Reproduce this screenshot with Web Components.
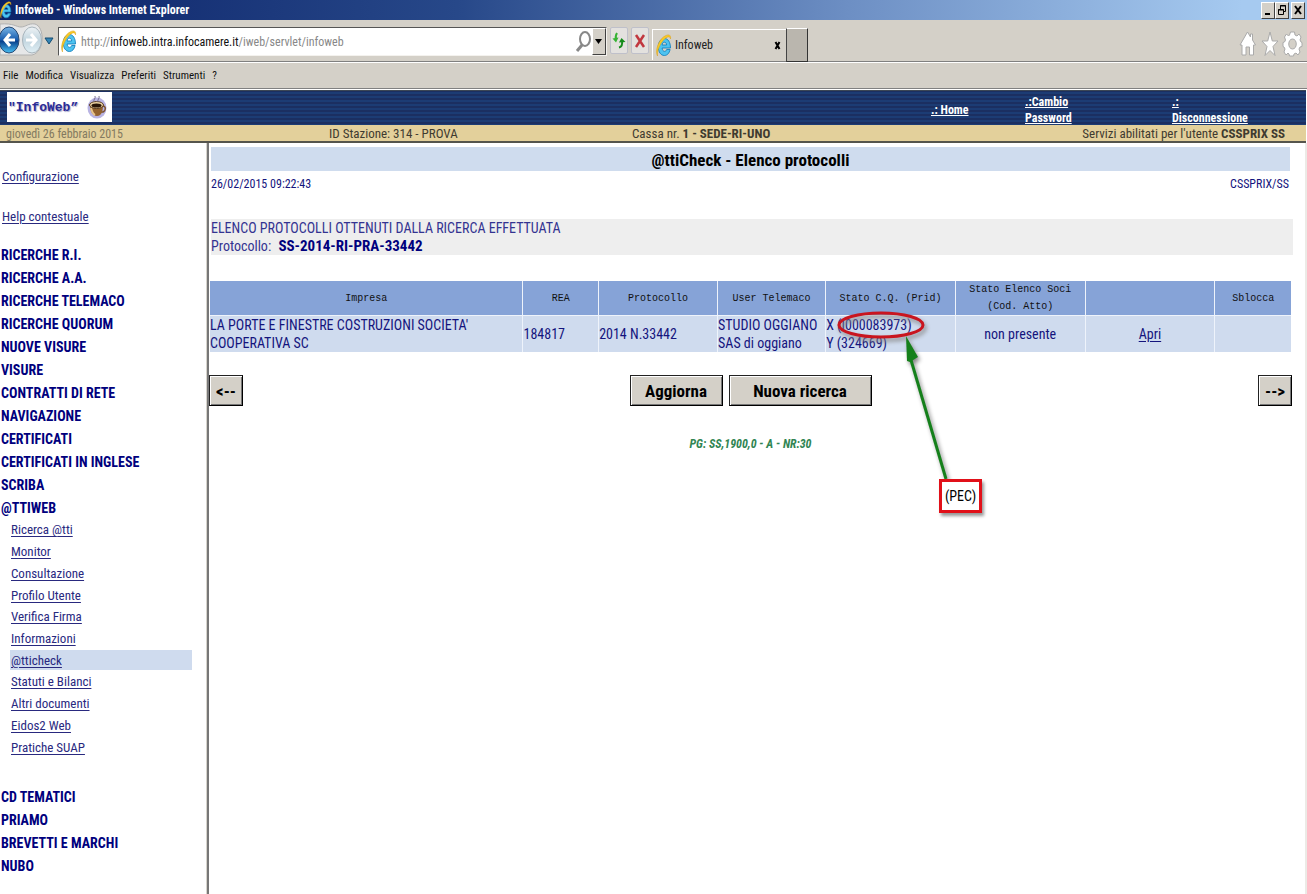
<!DOCTYPE html>
<html lang="it">
<head>
<meta charset="utf-8">
<title>Infoweb</title>
<style>
html,body{margin:0;min-height:100%;background:#fff;overflow-x:hidden}
body{--ui:"Roboto Condensed",Roboto,sans-serif;font-family:var(--ui);font-size:12px;color:#14147d}
</style>
</head>
<body>
<infoweb-app></infoweb-app>
<script>
function define(name, markup) {
  const t = document.createElement('template');
  t.innerHTML = markup;
  customElements.define(name, class extends HTMLElement {
    constructor() {
      super();
      this.attachShadow({ mode: 'open' }).append(t.content.cloneNode(true));
    }
  });
}

define('ie-logo', `
<style>:host{display:block}svg{display:block;width:100%;height:100%}</style>
<svg viewBox="1 0 21 23" preserveAspectRatio="none" aria-hidden="true">
  <path d="M19.500 15.500c-1 3.500-3.500 6-7.500 6-4.800 0-8-3.700-8-8.500S7.200 4.500 12 4.500s8 3.700 8 9.500H9c.3 2 1.500 3.400 3.300 3.400 1.300 0 2.200-.7 2.700-1.900zM9 11h6c-.2-1.800-1.300-2.800-3-2.800S9.300 9.200 9 11z" fill="#4dc3f0" stroke="#1280bd" stroke-width="1"/>
  <path d="M3 22C-1 17 5 4 14 1.500c4-1.400 7-.5 6 3.500-.3-3-4-2.500-7-.5C7 8.500 2 17 3 22z" fill="#f7c928" stroke="#d89a10" stroke-width=".5"/>
</svg>`);

define('ie-titlebar', `
<style>
:host{display:flex;align-items:center;height:20px;background:linear-gradient(90deg,#0c2369 0,#274889 35%,#6d8fc4 65%,#a6caf0 95%);color:#fff;font-weight:bold}
ie-logo{width:12px;height:18px;margin-right:3px;flex:none}
span{flex:1;line-height:20px}
.c{display:flex;padding-right:2px}
button{width:14px;height:17px;padding:0;border:1px solid;border-color:#fff #404040 #404040 #fff;background:#d4d0c8;display:block}
button:last-child{margin-left:2px}
svg{display:block;width:12px;height:14px}
</style>
<ie-logo></ie-logo><span>Infoweb - Windows Internet Explorer</span>
<div class="c">
<button aria-label="Riduci"><svg viewBox="0 0 12 14"><path d="M3 11h5" stroke="#000" stroke-width="2"/></svg></button>
<button aria-label="Ripristina"><svg viewBox="0 0 12 14"><path d="M4.500 6V2.500h5v6H8M4 3h6M2.500 6.500h5v5h-5zM2 7h6" fill="none" stroke="#000"/></svg></button>
<button aria-label="Chiudi"><svg viewBox="0 0 12 14"><path d="M3 3l6 8M9 3l-6 8" stroke="#000" stroke-width="2"/></svg></button>
</div>`);

define('ie-tab', `
<style>
:host{display:flex;align-items:center;width:134px;height:31px;border-left:1px solid #fff;border-top:1px solid #fff;box-sizing:border-box;color:#222}
ie-logo{width:16px;height:23px;margin:0 3px 0 3px}
span{flex:1}
button{border:0;background:none;padding:0;width:8px;height:12px;margin-right:4px}
svg{display:block}
</style>
<ie-logo></ie-logo><span><slot></slot></span>
<button aria-label="Chiudi scheda"><svg width="8" height="12" viewBox="0 0 8 12"><path d="M1.500 3l4 7M5.500 3l-4 7" stroke="#000" stroke-width="2"/></svg></button>`);

define('ie-toolbar', `
<style>
:host{display:flex;align-items:flex-start;height:41px;background:#d4d0c8;border-bottom:1px solid #808080;box-shadow:0 1px #fff}
.nav{flex:none;width:58px;height:41px}
.addr{display:flex;align-items:center;flex:0 1 549px;height:29px;box-sizing:border-box;margin-top:7px;background:#fff;border:1px solid;border-color:#555 #f4f2ee #f4f2ee #555}
.addr ie-logo{flex:none;width:16px;height:23px;margin:0 4px 0 2px}
.u{flex:1;position:relative;display:flex;color:#888;white-space:pre}
.u b{font-weight:normal;color:#111}
.u input{position:absolute;inset:0;border:0;padding:0;width:100%;background:transparent;font:inherit}
button{padding:0;box-sizing:border-box;background:none;border:0}
svg{display:block}
.dd{width:14px;height:27px;background:#d4d0c8;border:1px solid;border-color:#fff #404040 #404040 #fff}
.sq{width:18px;height:27px;margin:7px 0 0 3px;background:#e3e1de;border:1px solid #bfc0ca;border-radius:2px}
ie-tab{margin:9px 0 0 3px}
.new{width:22px;height:34px;margin:8px 0 0;background:#bab6ae;border:1px solid;border-color:#fff #333 #333 #444}
.sp{flex:1}
</style>
<svg class="nav" viewBox="0 0 58 41" role="img" aria-label="Indietro e avanti">
  <defs><linearGradient id="a" x2="0" y2="1"><stop stop-color="#78b5e6"/><stop offset=".48" stop-color="#1a5eaf"/><stop offset=".55" stop-color="#08408c"/><stop offset="1" stop-color="#4ac2f5"/></linearGradient>
  <linearGradient id="b" x2="0" y2="1"><stop stop-color="#eef3f6"/><stop offset=".5" stop-color="#c2d5df"/><stop offset="1" stop-color="#e0eff5"/></linearGradient></defs>
  <path d="M0 4C14 3 16 7 21 7s7-4 14-3c10 3 10 28-3 31H0z" fill="#e6e7e8" stroke="#b0b0b0"/>
  <ellipse cx="9" cy="20" rx="10" ry="13" fill="url(#a)" stroke="#294b75" stroke-width="1"/>
  <ellipse cx="32" cy="20" rx="9.500" ry="13" fill="url(#b)" stroke="#a7b4bc" stroke-width="1"/>
  <path d="M15 20H5M10 14l-5 6 5 6" fill="none" stroke="#fff" stroke-width="3"/>
  <path d="M26 20h10M31 14l5 6-5 6" fill="none" stroke="#fff" stroke-width="3"/>
  <path d="M45 18h8l-4 6z" fill="#3485b5" stroke="#164d73"/>
</svg>
<div class="addr"><ie-logo></ie-logo><div class="u">http://<b>infoweb.intra.infocamere.it</b>/iweb/servlet/infoweb<input aria-label="Indirizzo"></div>
<svg width="18" height="27" viewBox="0 0 18 27"><ellipse cx="11" cy="11" rx="5" ry="7" fill="none" stroke="#888" stroke-width="2"/><path d="M8 17l-5 6" stroke="#888" stroke-width="3"/></svg>
<button class="dd" aria-label="Cronologia"><svg width="12" height="25"><path d="M2 10h7l-3.500 5z" fill="#000"/></svg></button></div>
<button class="sq" aria-label="Aggiorna pagina"><svg width="16" height="25" viewBox="0 0 16 25"><path d="M6 5q-2 3-1 7" fill="none" stroke="#35b335" stroke-width="2"/><path d="M1.500 10.500l3.500 4 2.500-5z" fill="#35b335"/><path d="M8 19.500q4-1 3-7" fill="none" stroke="#158c1b" stroke-width="2"/><path d="M8 14.500l2.500-4.500 4 4z" fill="#158c1b"/></svg></button>
<button class="sq" aria-label="Interrompi"><svg width="16" height="25" viewBox="0 0 16 25"><path d="M4 7l8 12M12 7L4 19" stroke="#c1373f" stroke-width="2.500"/></svg></button>
<ie-tab>Infoweb</ie-tab>
<button class="new" aria-label="Nuova scheda"></button>
<div class="sp"></div>
<svg width="68" height="41" viewBox="0 0 68 41" fill="#fff" stroke="#aaa" stroke-width="1">
 <path d="M1 25L8.500 12l3 5v-3h2v6l3 5h-2v10h-4v-8H7v8H3V25z"/>
 <path d="M31 12l2.300 9H39l-5 5.500 2 9-5-5-5 5 2-9-5-5.500h5.700z"/>
 <path fill-rule="evenodd" d="M51.500 12h4l.5 3 2 1 2-2 2 3-1 3 1 2 1 .5v4l-2 .5-1 2 1 3-2 3-2-2-2 1-.5 2h-4l-.5-2-1-1-2 2-2-3 1-3-1-2-1-.5v-4l1.500-.5 1-2-1-3 2-3 2 2 1-1zM53.500 19c-5 0-5 10 0 10s5-10 0-10z"/>
</svg>`);

define('ie-menubar', `
<style>
:host{display:flex;align-items:center;height:25px;margin-top:1px;padding-left:3px;gap:7px;background:#d4d0c8;border-bottom:1px solid #808080;color:#111}
button{font:11px/18px var(--ui);color:inherit;border:0;background:none;padding:0}
</style>
<button>File</button><button>Modifica</button><button>Visualizza</button><button>Preferiti</button><button>Strumenti</button><button>?</button>`);

define('iw-header', `
<style>
:host{display:flex;height:35px;margin:1px 1px 0 0;background:repeating-linear-gradient(#1b2f61 0 1px,#1c3c74 1px 3px,#1b2f61 3px 4px);border-top:1px solid #3c4654;box-sizing:border-box;font-weight:bold;font-size:12px;line-height:16px}
.logo{flex:none;display:flex;align-items:center;justify-content:space-between;box-sizing:border-box;width:105px;height:30px;margin:1px 0 0 7px;background:#fff;color:#2b2b96;font:bold 13px "Liberation Mono",monospace;padding:0 5px 0 1px;text-shadow:1px 1px 1px #aac}
nav{flex:1;display:grid;grid-template-columns:1fr 94px 147px 134px;align-items:center;padding-top:3px}
a{color:#fff}
</style>
<div class="logo">"InfoWeb”<svg width="20" height="24" viewBox="0 0 20 24"><ellipse cx="10" cy="13" rx="9.500" ry="10.500" fill="#b9b4e3"/><path d="M15 11c5-1 4 7-1 6" fill="none" stroke="#7a5230" stroke-width="1.500"/><path d="M3 10c0 5 2 11 7 11s6-6 6-11z" fill="#94632f"/><path d="M4 13c1 4 2 6 4 7" stroke="#e8c58c" stroke-width="2" fill="none"/><ellipse cx="9.500" cy="10" rx="7" ry="3.500" fill="#e8d0a0" stroke="#5a3b20"/><ellipse cx="9.500" cy="10.500" rx="5" ry="2" fill="#281407"/><path d="M7 7c-1-3 2-3 1-6M11 7c-1-3 2-3 1-6" stroke="#77708f" fill="none"/></svg></div>
<nav><span></span><a href="#home">.: Home</a><a href="#password">.:Cambio<br>Password</a><a href="#logout">.:<br>Disconnessione</a></nav>`);

define('iw-infobar', `
<style>
:host{display:grid;grid-template-columns:323px 303px 1fr auto;height:18px;margin-right:1px;box-sizing:border-box;padding:0 21px 0 6px;background:#e3d09b;border-bottom:2px solid #55554d;line-height:18px;color:#3f3b30;font-size:13px}
.d{color:#847a60;font-size:12px}
</style>
<span class="d">giovedì 26 febbraio 2015</span><span>ID Stazione: 314 - PROVA</span><span>Cassa nr. <b>1 - SEDE-RI-UNO</b></span><span>Servizi abilitati per l'utente <b>CSSPRIX SS</b></span>`);

define('iw-section', `
<style>:host{display:flex;align-items:center;height:23px;font-size:14px;font-weight:bold;color:#00007d;padding-left:1px}</style><slot></slot>`);

define('iw-link', `
<style>
:host{display:flex;align-items:center}
:host([current]){background:linear-gradient(#cfdbee,#cfdbee) center/100% 20px no-repeat}
a{color:#29297f;text-underline-offset:2px;text-decoration-thickness:1px}
</style><a href="#voce"><slot></slot></a>`);

define('iw-sidebar', `
<style>
:host{display:block;width:206px;flex:none;border-right:1px solid #d6d3cc;font-size:13px}
.top{display:grid;grid-auto-rows:40px;padding:13px 0 7px 2px}
.sub{display:grid;grid-auto-rows:1fr;min-height:239px;margin:0 14px 27px 10px}
.sub iw-link{padding-left:1px}
</style>
<div class="top"><iw-link>Configurazione</iw-link><iw-link>Help contestuale</iw-link></div>
<iw-section>RICERCHE R.I.</iw-section><iw-section>RICERCHE A.A.</iw-section><iw-section>RICERCHE TELEMACO</iw-section><iw-section>RICERCHE QUORUM</iw-section><iw-section>NUOVE VISURE</iw-section><iw-section>VISURE</iw-section><iw-section>CONTRATTI DI RETE</iw-section><iw-section>NAVIGAZIONE</iw-section><iw-section>CERTIFICATI</iw-section><iw-section>CERTIFICATI IN INGLESE</iw-section><iw-section>SCRIBA</iw-section><iw-section>@TTIWEB</iw-section>
<div class="sub"><iw-link>Ricerca @tti</iw-link><iw-link>Monitor</iw-link><iw-link>Consultazione</iw-link><iw-link>Profilo Utente</iw-link><iw-link>Verifica Firma</iw-link><iw-link>Informazioni</iw-link><iw-link current>@tticheck</iw-link><iw-link>Statuti e Bilanci</iw-link><iw-link>Altri documenti</iw-link><iw-link>Eidos2 Web</iw-link><iw-link>Pratiche SUAP</iw-link></div>
<iw-section>CD TEMATICI</iw-section><iw-section>PRIAMO</iw-section><iw-section>BREVETTI E MARCHI</iw-section><iw-section>NUBO</iw-section>`);

define('iw-button', `
<style>
:host{display:block}
button{display:block;width:100%;height:31px;padding:0;box-sizing:border-box;border:1px solid;border-color:#222 #000 #000 #222;box-shadow:inset 1px 1px #fff,inset -1px -1px #777;background:#d4d0c8;color:#000;font:bold 17px var(--ui)}
</style><button><slot></slot></button>`);

define('iw-callout', `
<style>
:host{position:absolute;left:0;top:0;width:170px;height:210px;pointer-events:none}
svg{position:absolute;inset:0;overflow:visible}
.n{position:absolute;left:113px;top:163px;width:43px;height:34px;box-sizing:border-box;border:3px solid #e11019;background:#fff;color:#000;text-align:center;line-height:28px;font-size:14px;box-shadow:2px 3px 3px #999}
</style>
<svg width="170" height="210" viewBox="0 0 170 210"><g style="filter:drop-shadow(2px 3px 2px #888)"><ellipse cx="55" cy="9" rx="42" ry="12" fill="none" stroke="#c9151f" stroke-width="3"/><path d="M120 163L85 44" stroke="#15801b" stroke-width="3"/><path d="M80 20l12 21-8 5-3-1z" fill="#15801b"/></g></svg>
<div class="n"><slot></slot></div>`);

define('iw-table', `
<style>
:host{display:block;margin:26px 14px 0 1px}
table{width:100%;table-layout:fixed;border-collapse:separate;border-spacing:0}
th,td{padding:0;border-right:1px solid #eef3fb;position:relative}
th:last-child,td:last-child{border-right:0}
th{height:34px;background:#86a3d7;border-bottom:1px solid #eef3fb;font:10px/17px "Liberation Mono",monospace;color:#111}
td{height:36px;background:#cfdbee;line-height:18px;font-size:14px;white-space:nowrap}
.c{text-align:center}
a{color:#14147d;text-underline-offset:2px}
</style>
<table>
<colgroup><col style="width:29%"><col style="width:7%"><col style="width:11%"><col style="width:10%"><col style="width:12%"><col style="width:12%"><col style="width:12%"><col style="width:7%"></colgroup>
<thead><tr><th>Impresa</th><th>REA</th><th>Protocollo</th><th>User Telemaco</th><th>Stato C.Q. (Prid)</th><th>Stato Elenco Soci<br>(Cod. Atto)</th><th></th><th>Sblocca</th></tr></thead>
<tbody><tr><td>LA PORTE E FINESTRE COSTRUZIONI SOCIETA'<br>COOPERATIVA SC</td><td>184817</td><td>2014 N.33442</td><td>STUDIO OGGIANO<br>SAS di oggiano</td><td>X (I000083973)<br>Y (324669)<iw-callout>(PEC)</iw-callout></td><td class="c">non presente</td><td class="c"><a href="#apri">Apri</a></td><td></td></tr></tbody>
</table>`);

define('iw-main', `
<style>
:host{display:block;flex:1;min-width:0;border-left:2px solid #777;border-right:2px solid #eceae6;padding-top:4px}
h1{margin:0 15px 0 2px;height:24px;line-height:26px;background:#cfdcee;text-align:center;font-size:17px;color:#000}
.m{display:flex;justify-content:space-between;padding:4px 16px 0 2px;line-height:18px;font-size:12px}
.q{margin:26px 12px 0 2px;height:36px;line-height:18px;font-size:14px;background:#eee;color:#333391}
.q b{color:#00007d;margin-left:4px;font-size:15px;line-height:16px}
.b{display:grid;grid-template-columns:34px 1fr 34px;margin:23px 13px 0 0}
.b div{display:flex;justify-content:center;gap:6px}
.a{width:93px}.r{width:143px}
p{margin:29px 15px 0 2px;text-align:center;font:italic bold 12px/18px var(--ui);color:#318553}
</style>
<h1>@ttiCheck - Elenco protocolli</h1>
<div class="m"><span>26/02/2015 09:22:43</span><span>CSSPRIX/SS</span></div>
<div class="q">ELENCO PROTOCOLLI OTTENUTI DALLA RICERCA EFFETTUATA<br>Protocollo: <b>SS-2014-RI-PRA-33442</b></div>
<iw-table></iw-table>
<div class="b"><iw-button>&lt;--</iw-button><div><iw-button class="a">Aggiorna</iw-button><iw-button class="r">Nuova ricerca</iw-button></div><iw-button>--&gt;</iw-button></div>
<p>PG: SS,1900,0 - A - NR:30</p>`);

define('infoweb-app', `
<style>:host{display:flex;flex-direction:column;min-height:100vh}.body{display:flex;flex:1}</style>
<ie-titlebar></ie-titlebar><ie-toolbar></ie-toolbar><ie-menubar></ie-menubar><iw-header></iw-header><iw-infobar></iw-infobar>
<div class="body"><iw-sidebar></iw-sidebar><iw-main></iw-main></div>`);
</script>
</body>
</html>
